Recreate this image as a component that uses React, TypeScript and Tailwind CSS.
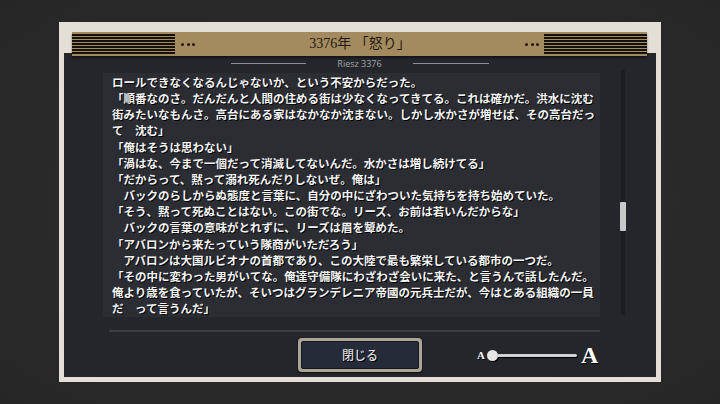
import React from "react";

const lines = [
  "ロールできなくなるんじゃないか、という不安からだった。",
  "「順番なのさ。だんだんと人間の住める街は少なくなってきてる。これは確かだ。洪水に沈む",
  "街みたいなもんさ。高台にある家はなかなか沈まない。しかし水かさが増せば、その高台だっ",
  "て　沈む」",
  "「俺はそうは思わない」",
  "「渦はな、今まで一個だって消滅してないんだ。水かさは増し続けてる」",
  "「だからって、黙って溺れ死んだりしないぜ。俺は」",
  "　バックのらしからぬ態度と言葉に、自分の中にざわついた気持ちを持ち始めていた。",
  "「そう、黙って死ぬことはない。この街でな。リーズ、お前は若いんだからな」",
  "　バックの言葉の意味がとれずに、リーズは眉を顰めた。",
  "「アバロンから来たっていう隊商がいただろう」",
  "　アバロンは大国ルビオナの首都であり、この大陸で最も繁栄している都市の一つだ。",
  "「その中に変わった男がいてな。俺達守備隊にわざわざ会いに来た、と言うんで話したんだ。",
  "俺より歳を食っていたが、そいつはグランデレニア帝國の元兵士だが、今はとある組織の一員",
  "だ　って言うんだ」",
];

const Stripes = () => (
  <div className="flex h-full w-[103px] flex-col justify-between py-[2px]">
    {[0, 1, 2, 3, 4, 5, 6].map((i) => (
      <div key={i} className="h-[1.5px] w-full bg-[#15110c]" />
    ))}
  </div>
);

const Dots = () => (
  <div className="flex gap-[2.5px]">
    <span className="h-[3px] w-[3px] rounded-full bg-[#1f1a12]" />
    <span className="h-[3px] w-[3px] rounded-full bg-[#1f1a12]" />
    <span className="h-[3px] w-[3px] rounded-full bg-[#1f1a12]" />
  </div>
);

export default function App() {
  return (
    <div className="h-[404px] w-[720px] overflow-hidden bg-[#2b2b2b] bg-[radial-gradient(ellipse_at_center,#303030_0%,#262626_100%)] pl-[59px] pt-[22px]">
      <div className="flex h-[360px] w-[602px] flex-col bg-[#e3ded6] px-[5px] pb-[5px]">
        {/* header bar */}
        <div className="relative z-10 -mb-[3px] mt-[10px] ml-[8px] mr-[9px] flex h-[24px] items-center bg-[#a48a5f] shadow-[0_2px_2px_rgba(0,0,0,0.45)]">
          <Stripes />
          <div className="ml-[6px]">
            <Dots />
          </div>
          <div className="flex-1 text-center font-['Liberation_Serif','Noto_Sans_CJK_JP',serif] text-[14px] leading-none text-[#211b11]">
            3376年 「怒り」
          </div>
          <div className="mr-[5px]">
            <Dots />
          </div>
          <Stripes />
        </div>

        {/* dark body */}
        <div className="flex flex-1 flex-col bg-[#25262b]">
          <div className="mt-[5px] flex h-[10px] items-center justify-center">
            <div className="h-px w-[75px] bg-[#8d8f93]" />
            <div className="mx-[31px] font-['Open_Sans','DejaVu_Sans',sans-serif] text-[9px] leading-none text-[#a3a5a9]">
              Riesz 3376
            </div>
            <div className="h-px w-[76px] bg-[#8d8f93]" />
          </div>

          <div className="mt-[5px] flex items-start pl-[39px] pr-[31px]">
            <div className="h-[244px] flex-1 overflow-hidden bg-[#2c2d33] pl-[9px] pt-[1px] font-['Noto_Sans_CJK_JP',sans-serif] text-[11.5px] font-bold leading-[16.15px] text-[#f4f4f4] [text-shadow:1px_1px_0_#000]">
              {lines.map((l, i) => (
                <div key={i} className="whitespace-nowrap">
                  {l}
                </div>
              ))}
            </div>
            <div className="-mt-[3px] ml-[21px] flex h-[245px] w-[4px] flex-col bg-[#1c1d21]">
              <div className="mt-[132px] h-[29px] w-[6px] -ml-px rounded-[1px] bg-[#c9c9c9]" />
            </div>
          </div>

          <div className="ml-[45px] mt-[13px] h-[2px] w-[491px] bg-[#3b3e44]" />

          <div className="mt-[6px] flex items-center pl-[234px]">
            <div className="h-[34px] w-[124px] rounded-[4px] bg-[#aaa595] p-[3px] shadow-[0_1px_2px_rgba(0,0,0,0.6)]">
              <div className="flex h-full w-full items-center justify-center rounded-[2px] border border-[#14171e] bg-[#252b39] font-['Noto_Sans_CJK_JP',sans-serif] text-[12px] font-medium text-[#dedede] [text-shadow:1px_1px_0_#000]">
                閉じる
              </div>
            </div>
            <div className="ml-[55px] flex items-center">
              <span className="font-['Liberation_Serif',serif] text-[11px] font-bold leading-none text-white [text-shadow:1px_1px_0_#000]">
                A
              </span>
              <div className="ml-[2px] h-[11px] w-[11px] rounded-full bg-[#e6e6e6] shadow-[1px_1px_0_#000]" />
              <div className="-ml-px h-[3px] w-[80px] rounded-full bg-[#d2d2d2] shadow-[1px_1px_0_#000]" />
              <span className="ml-[4px] font-['Liberation_Serif',serif] text-[24px] font-bold leading-none text-white [text-shadow:1px_1px_0_#000]">
                A
              </span>
            </div>
          </div>
        </div>
      </div>
    </div>
  );
}
